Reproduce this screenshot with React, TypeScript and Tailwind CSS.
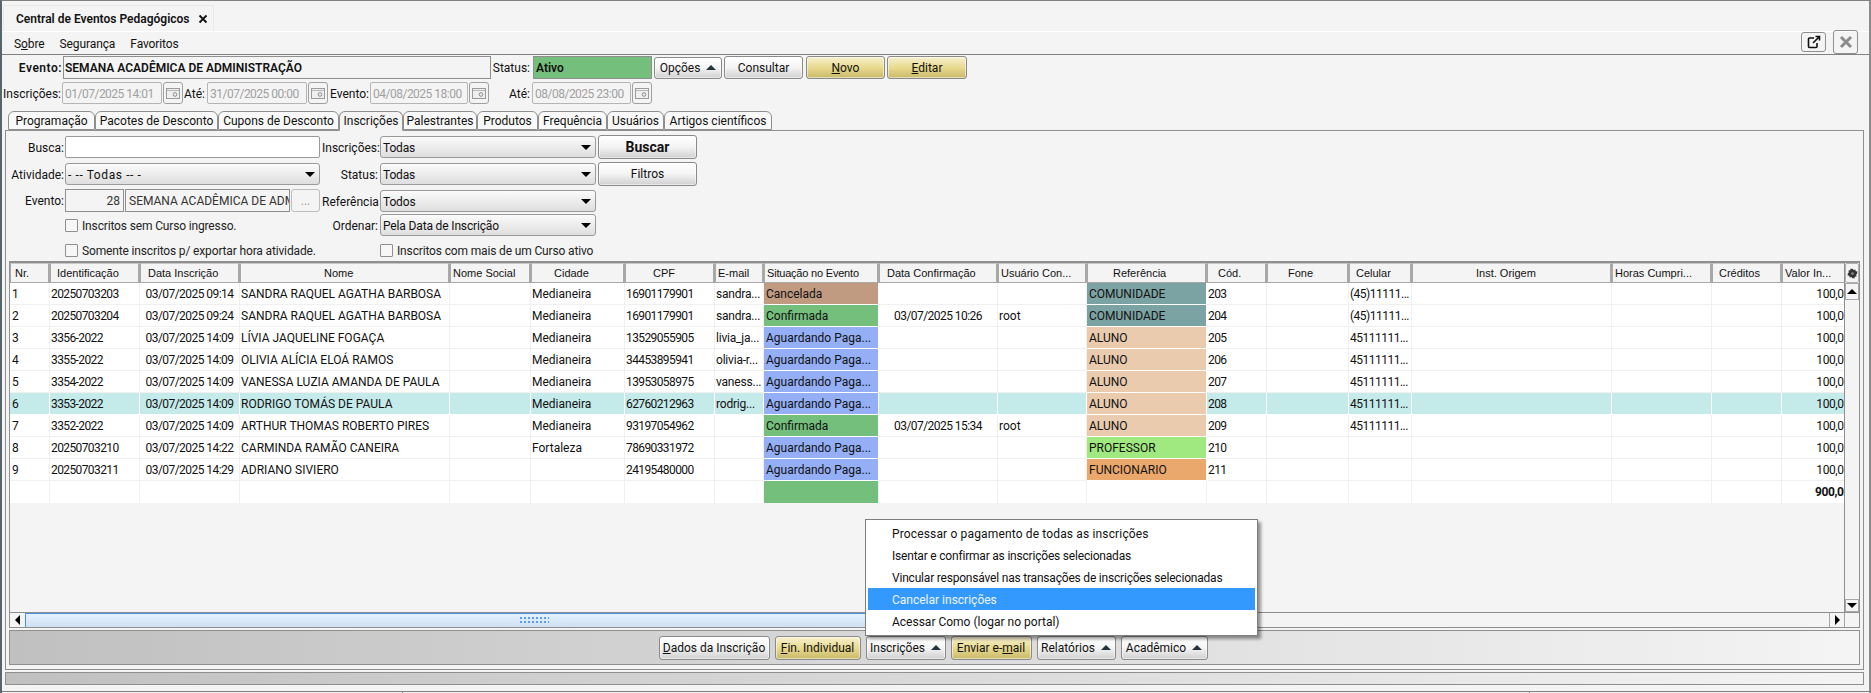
import React from 'react';

const font = "font-['Roboto','Liberation_Sans',sans-serif]";

const columns = [
    { title: 'Nr.', width: 40, head: 'pl-[4px]', cell: 'text-left pl-[2px]' },
    { title: 'Identificação', width: 90, head: 'pl-[6px]', cell: 'text-left pl-[1px] tracking-[-0.6px]' },
    { title: 'Data Inscrição', width: 100, head: 'pl-[7px]', cell: 'text-center tracking-[-0.55px]' },
    { title: 'Nome', width: 210, head: 'pl-[83px]', cell: 'text-left pl-[1px]' },
    { title: 'Nome Social', width: 81, head: 'pl-[2px]', cell: 'text-left' },
    { title: 'Cidade', width: 94, head: 'pl-[22px]', cell: 'text-left pl-[1px]' },
    { title: 'CPF', width: 90, head: 'pl-[27px]', cell: 'text-left pl-[1px] tracking-[-0.6px]' },
    { title: 'E-mail', width: 49, head: 'pl-[2px]', cell: 'text-left pl-[1px] tracking-[-0.2px]' },
    { title: 'Situação no Evento', width: 115, head: 'pl-[2px] tracking-[-0.2px]', cell: 'text-left pl-[2px]' },
    { title: 'Data Confirmação', width: 119, head: 'pl-[7px]', cell: 'text-center tracking-[-0.55px]' },
    { title: 'Usuário Con...', width: 89, head: 'pl-[2px]', cell: 'text-left pl-[1px]' },
    { title: 'Referência', width: 120, head: 'pl-[25px]', cell: 'text-left pl-[2px]' },
    { title: 'Cód.', width: 60, head: 'pl-[10px]', cell: 'text-left pl-[1px] tracking-[-0.6px]' },
    { title: 'Fone', width: 82, head: 'pl-[20px]', cell: 'text-left' },
    { title: 'Celular', width: 63, head: 'pl-[6px]', cell: 'text-left pl-[1px] tracking-[-0.5px]' },
    { title: 'Inst. Origem', width: 200, head: 'pl-[63px]', cell: 'text-left' },
    { title: 'Horas Cumpri...', width: 100, head: 'pl-[2px]', cell: 'text-left' },
    { title: 'Créditos', width: 70, head: 'pl-[6px]', cell: 'text-left' },
    { title: 'Valor In...', width: 72, head: 'pl-[2px]', cell: 'text-right pr-[3px] tracking-[-0.4px]' },
];

const situacao: Record<string, string> = {
    'Cancelada': 'bg-[#c19a82]',
    'Confirmada': 'bg-[#74bf7c]',
    'Aguardando Paga...': 'bg-[#94aff6]',
};

const referencia: Record<string, string> = {
    'COMUNIDADE': 'bg-[#7ca3a3]',
    'ALUNO': 'bg-[#eacbae]',
    'PROFESSOR': 'bg-[#a0e880]',
    'FUNCIONARIO': 'bg-[#eaa86c]',
};

const rows = [
    ['1', '20250703203', '03/07/2025 09:14', 'SANDRA RAQUEL AGATHA BARBOSA', '', 'Medianeira', '16901179901', 'sandra...', 'Cancelada', '', '', 'COMUNIDADE', '203', '', '(45)11111...', '', '', '', '100,00'],
    ['2', '20250703204', '03/07/2025 09:24', 'SANDRA RAQUEL AGATHA BARBOSA', '', 'Medianeira', '16901179901', 'sandra...', 'Confirmada', '03/07/2025 10:26', 'root', 'COMUNIDADE', '204', '', '(45)11111...', '', '', '', '100,00'],
    ['3', '3356-2022', '03/07/2025 14:09', 'LÍVIA JAQUELINE FOGAÇA', '', 'Medianeira', '13529055905', 'livia_ja...', 'Aguardando Paga...', '', '', 'ALUNO', '205', '', '45111111...', '', '', '', '100,00'],
    ['4', '3355-2022', '03/07/2025 14:09', 'OLIVIA ALÍCIA ELOÁ RAMOS', '', 'Medianeira', '34453895941', 'olivia-r...', 'Aguardando Paga...', '', '', 'ALUNO', '206', '', '45111111...', '', '', '', '100,00'],
    ['5', '3354-2022', '03/07/2025 14:09', 'VANESSA LUZIA AMANDA DE PAULA', '', 'Medianeira', '13953058975', 'vaness...', 'Aguardando Paga...', '', '', 'ALUNO', '207', '', '45111111...', '', '', '', '100,00'],
    ['6', '3353-2022', '03/07/2025 14:09', 'RODRIGO TOMÁS DE PAULA', '', 'Medianeira', '62760212963', 'rodrig...', 'Aguardando Paga...', '', '', 'ALUNO', '208', '', '45111111...', '', '', '', '100,00'],
    ['7', '3352-2022', '03/07/2025 14:09', 'ARTHUR THOMAS ROBERTO PIRES', '', 'Medianeira', '93197054962', '', 'Confirmada', '03/07/2025 15:34', 'root', 'ALUNO', '209', '', '45111111...', '', '', '', '100,00'],
    ['8', '20250703210', '03/07/2025 14:22', 'CARMINDA RAMÃO CANEIRA', '', 'Fortaleza', '78690331972', '', 'Aguardando Paga...', '', '', 'PROFESSOR', '210', '', '', '', '', '', '100,00'],
    ['9', '20250703211', '03/07/2025 14:29', 'ADRIANO SIVIERO', '', '', '24195480000', '', 'Aguardando Paga...', '', '', 'FUNCIONARIO', '211', '', '', '', '', '', '100,00'],
];

const tabs = [
    { label: 'Programação', width: 87 },
    { label: 'Pacotes de Desconto', width: 123 },
    { label: 'Cupons de Desconto', width: 121 },
    { label: 'Inscrições', width: 64, active: true },
    { label: 'Palestrantes', width: 74 },
    { label: 'Produtos', width: 61 },
    { label: 'Frequência', width: 69 },
    { label: 'Usuários', width: 57 },
    { label: 'Artigos científicos', width: 108 },
];

const buttonBase = 'flex items-center justify-center shrink-0 border border-[#8a8a8a] rounded-[3px] text-[12px] text-[#111] shadow-[inset_0_0_0_1px_#ffffff80]';
const plainBtn = 'bg-gradient-to-b from-white via-[#f4f4f4] to-[#d0d0d0]';
const goldBtn = 'bg-gradient-to-b from-[#f7f1d0] via-[#e8da8e] to-[#c9b96a]';

function Caret() {
    return <span className="ml-[6px] w-0 h-0 border-x-[5px] border-x-transparent border-b-[5px] border-b-[#26323a]" />;
}

function Arrow({ dir }: { dir: 'up' | 'down' | 'left' | 'right' }) {
    const cls = {
        up: 'border-x-[5px] border-x-transparent border-b-[5px] border-b-black',
        down: 'border-x-[5px] border-x-transparent border-t-[5px] border-t-black',
        left: 'border-y-[5px] border-y-transparent border-r-[5px] border-r-black',
        right: 'border-y-[5px] border-y-transparent border-l-[5px] border-l-black',
    }[dir];
    return <span className={`w-0 h-0 shrink-0 ${cls}`} />;
}

function Label({ width, children, className = 'pt-[1px]' }: { width: string; children: React.ReactNode; className?: string }) {
    return <span className={`${width} shrink-0 text-right text-[12px] text-[#111] whitespace-nowrap ${className}`}>{children}</span>;
}

function DateField({ value, width }: { value: string; width: string }) {
    return (
        <div className="flex items-center gap-[1px] shrink-0">
            <div className={`${width} h-[22px] border border-[#b5b5b5] rounded-[2px] flex items-center pl-[2px] pt-[1px] whitespace-nowrap tracking-[-0.5px] text-[12px] text-[#a0a0a0] bg-[#f4f4f4]`}>{value}</div>
            <div className="w-[20px] h-[22px] border border-[#a0a0a0] rounded-[3px] flex items-center justify-center bg-[#f4f4f4]">
                <svg width="14" height="11" viewBox="0 0 14 11" fill="none">
                    <rect x="0.5" y="0.5" width="13" height="10" fill="#efefef" stroke="#9a9a9a" />
                    <path d="M1 2.5H13" stroke="#b8b8b8" />
                    <circle cx="9" cy="6.5" r="1.8" stroke="#8a8a8a" />
                </svg>
            </div>
        </div>
    );
}

function SelectBox({ value, width, spaced }: { value: string; width: string; spaced?: boolean }) {
    return (
        <div className={`${width} h-[22px] shrink-0 border border-[#9a9a9a] rounded-[3px] flex items-center justify-between pl-[2px] pr-[4px] text-[12px] text-[#111] bg-gradient-to-b from-[#fbfbfb] to-[#dedede]`}>
            <span className={`whitespace-nowrap pt-[1px] ${spaced ? 'tracking-[0.6px]' : 'tracking-[-0.15px]'}`}>{value}</span>
            <Arrow dir="down" />
        </div>
    );
}

function Check({ label, width }: { label: string; width: string }) {
    return (
        <div className={`${width} h-[13px] flex items-center gap-[4px] shrink-0 text-[12px] text-[#222] whitespace-nowrap tracking-[-0.15px]`}>
            <span className="w-[13px] h-[13px] shrink-0 border border-[#8f8f8f] bg-[#f7f7f7] rounded-[1px]" />
            {label}
        </div>
    );
}

function TableCell({ column, value, selected }: { column: (typeof columns)[number]; value: string; selected: boolean }) {
    const fill = situacao[value] || referencia[value];
    return (
        <div
            className={`shrink-0 h-full overflow-hidden whitespace-nowrap leading-[23px] border-r border-b ${fill ? `${fill} border-white` : selected ? 'border-white' : 'border-[#f0f0f0]'} ${column.cell}`}
            style={{ width: column.width }}
        >
            {value}
        </div>
    );
}

export default function App() {
    return (
        <div className={`relative w-[1871px] h-[693px] overflow-hidden bg-[#f4f4f4] flex flex-col border-t border-[#808080] border-l-2 border-l-[#56666c] border-r-2 border-r-[#8a8a8a] ${font}`}>
            {/* Window tab */}
            <div className="h-[30px] flex items-end shrink-0 pl-[1px]">
                <div className="w-[211px] h-[26px] border border-b-0 border-[#e8e8e8] rounded-t-[2px] flex items-center pl-[12px] gap-[8px] text-[12px] font-semibold text-[#111]">
                    Central de Eventos Pedagógicos
                    <svg width="10" height="10" viewBox="0 0 10 10"><path d="M1.5 1.5L8.5 8.5M8.5 1.5L1.5 8.5" stroke="#111" strokeWidth="1.8" /></svg>
                </div>
            </div>

            {/* Menu */}
            <div className="h-[24px] shrink-0 border-t border-white border-b border-b-[#808080] flex items-center pl-[12px] pr-[11px] gap-[15px] text-[12px] text-[#111]">
                <span className="pt-[1px] tracking-[-0.1px]">S<u>o</u>bre</span>
                <span className="pt-[1px] tracking-[-0.1px]">Segurança</span>
                <span className="pt-[1px] tracking-[-0.1px]">Favoritos</span>
                <div className="ml-auto flex gap-[7px]">
                    <div className="w-[25px] h-[20px] border border-[#8f8f8f] rounded-[3px] flex items-center justify-center">
                        <svg width="14" height="14" viewBox="0 0 14 14" fill="none">
                            <path d="M7 3H2.5A1 1 0 0 0 1.5 4V11.5A1 1 0 0 0 2.5 12.5H9A1 1 0 0 0 10 11.5V8" stroke="#111" strokeWidth="1.6" />
                            <path d="M6 8L12 2M8.5 1.5H12.5V5.5" stroke="#111" strokeWidth="1.6" />
                        </svg>
                    </div>
                    <div className="w-[25px] h-[24px] -mt-[2px] border border-[#8f8f8f] rounded-[3px] flex items-center justify-center">
                        <svg width="14" height="14" viewBox="0 0 14 14"><path d="M2 2L12 12M12 2L2 12" stroke="#8c8c8c" strokeWidth="3" /></svg>
                    </div>
                </div>
            </div>

            {/* Evento row */}
            <div className="h-[23px] mt-[1px] shrink-0 flex items-center">
                <Label width="w-[60px]" className="font-semibold tracking-[0.5px]">Evento:</Label>
                <div className="ml-[1px] w-[428px] h-full border border-[#8f8f8f] bg-[#f4f4f4] flex items-center pl-[1px] text-[12px] font-semibold text-[#111] shrink-0">SEMANA ACADÊMICA DE ADMINISTRAÇÃO</div>
                <Label width="w-[39px]" className="">Status:</Label>
                <div className="ml-[3px] w-[119px] h-full bg-[#74bf7c] border border-[#8f8f8f] flex items-center pl-[2px] text-[12px] font-semibold text-[#111] shrink-0">Ativo</div>
                <div className={`ml-[2px] w-[68px] h-[22px] ${buttonBase} ${plainBtn}`}>Opções<Caret /></div>
                <div className={`ml-[2px] w-[79px] h-full ${buttonBase} ${plainBtn}`}>Consultar</div>
                <div className={`ml-[3px] w-[79px] h-full ${buttonBase} ${goldBtn}`}><span><u>N</u>ovo</span></div>
                <div className={`ml-[2px] w-[80px] h-full ${buttonBase} ${goldBtn}`}><span><u>E</u>ditar</span></div>
            </div>

            {/* Datas row */}
            <div className="h-[22px] mt-[3px] shrink-0 flex items-center">
                <Label width="w-[59px]">Inscrições:</Label>
                <div className="ml-[1px]"><DateField value="01/07/2025 14:01" width="w-[100px]" /></div>
                <Label width="w-[22px]">Até:</Label>
                <div className="ml-[2px]"><DateField value="31/07/2025 00:00" width="w-[100px]" /></div>
                <Label width="w-[41px]">Evento:</Label>
                <div className="ml-[1px]"><DateField value="04/08/2025 18:00" width="w-[98px]" /></div>
                <Label width="w-[41px]">Até:</Label>
                <div className="ml-[2px]"><DateField value="08/08/2025 23:00" width="w-[99px]" /></div>
            </div>

            {/* Tabs */}
            <div className="h-[19px] mt-[7px] shrink-0 flex items-end pl-[6px] relative z-10">
                {tabs.map(tab => (
                    <div
                        key={tab.label}
                        className={`shrink-0 flex items-center justify-center whitespace-nowrap text-[12px] text-[#111] border border-[#8f8f8f] rounded-t-[6px] ${tab.active ? 'h-[20px] bg-[#f4f4f4] border-b-[#f4f4f4] -mb-[1px]' : 'h-[19px] bg-[#f9f9f9]'}`}
                        style={{ width: tab.width }}
                    >
                        {tab.label}
                    </div>
                ))}
            </div>

            {/* Tab panel */}
            <div className="h-[540px] shrink-0 ml-[3px] mr-[5px] border border-[#8f8f8f] px-[3px] flex flex-col">
                {/* Filters */}
                <div className="mt-[5px] shrink-0 flex">
                    <div className="w-[313px] shrink-0 flex flex-col">
                        <div className="h-[22px] flex items-center gap-[1px]">
                            <Label width="w-[55px]">Busca:</Label>
                            <div className="w-[255px] h-full border border-[#9a9a9a] rounded-[2px] bg-white" />
                        </div>
                        <div className="h-[22px] mt-[5px] flex items-center gap-[1px]">
                            <Label width="w-[55px]">Atividade:</Label>
                            <SelectBox value="- -- Todas -- -" width="w-[255px]" spaced />
                        </div>
                        <div className="h-[23px] mt-[4px] flex items-center gap-[1px]">
                            <Label width="w-[55px]">Evento:</Label>
                            <div className="w-[59px] h-full border border-[#8f8f8f] flex items-center justify-end pr-[3px] text-[12px] text-[#333] bg-[#f4f4f4]">28</div>
                            <div className="w-[165px] h-full border border-[#8f8f8f] flex items-center pl-[3px] overflow-hidden whitespace-nowrap text-[12px] text-[#333] bg-[#f4f4f4]">SEMANA ACADÊMICA DE ADM</div>
                            <div className="w-[29px] h-full border border-[#bdbdbd] rounded-[3px] flex items-center justify-center text-[12px] text-[#9a9a9a]">...</div>
                        </div>
                        <div className="mt-[7px] ml-[56px]"><Check label="Inscritos sem Curso ingresso." width="w-[255px]" /></div>
                        <div className="mt-[12px] ml-[56px]"><Check label="Somente inscritos p/ exportar hora atividade." width="w-[255px]" /></div>
                    </div>
                    <div className="w-[274px] shrink-0 flex flex-col">
                        <div className="h-[22px] flex items-center gap-[1px]">
                            <Label width="w-[56px]">Inscrições:</Label>
                            <div className="ml-[1px]"><SelectBox value="Todas" width="w-[216px]" /></div>
                        </div>
                        <div className="h-[22px] mt-[5px] flex items-center gap-[1px]">
                            <Label width="w-[56px]">Status:</Label>
                            <div className="ml-[1px]"><SelectBox value="Todas" width="w-[216px]" /></div>
                        </div>
                        <div className="h-[22px] mt-[5px] flex items-center gap-[1px]">
                            <Label width="w-[56px]">Referência</Label>
                            <div className="ml-[1px]"><SelectBox value="Todos" width="w-[216px]" /></div>
                        </div>
                        <div className="h-[22px] mt-[2px] flex items-center gap-[1px]">
                            <Label width="w-[56px]">Ordenar:</Label>
                            <div className="ml-[1px]"><SelectBox value="Pela Data de Inscrição" width="w-[216px]" /></div>
                        </div>
                        <div className="mt-[8px] ml-[58px]"><Check label="Inscritos com mais de um Curso ativo" width="w-[216px]" /></div>
                    </div>
                    <div className="ml-[2px] flex flex-col gap-[3px] -mt-[1px]">
                        <div className={`w-[99px] h-[24px] ${buttonBase} ${plainBtn} !text-[14px] font-bold`}>Buscar</div>
                        <div className={`w-[99px] h-[24px] ${buttonBase} ${plainBtn}`}>Filtros</div>
                    </div>
                </div>

                {/* Grid */}
                <div className="mt-[4px] h-[367px] shrink-0 border-t-2 border-x border-b border-[#8f8f8f] flex flex-col">
                    <div className="flex-1 min-h-0 flex">
                        <div className="flex-1 min-w-0 overflow-hidden text-[12px] text-[#111]">
                            <div className="flex h-[20px] font-['Liberation_Sans',sans-serif] text-[11px]">
                                {columns.map(col => (
                                    <div
                                        key={col.title}
                                        className={`shrink-0 overflow-hidden whitespace-nowrap text-left leading-[18px] bg-[#f4f4f4] border border-[#a8a8a8] border-t-[#c8c8c8] border-r-2 ${col.head}`}
                                        style={{ width: col.width }}
                                    >
                                        {col.title}
                                    </div>
                                ))}
                            </div>
                            {rows.map(row => {
                                const selected = row[0] === '6';
                                return (
                                    <div key={row[0]} className={`flex h-[22px] ${selected ? 'bg-[#c5eaea]' : 'bg-white'}`}>
                                        {row.map((value, i) => (
                                            <TableCell key={i} column={columns[i]} value={value} selected={selected} />
                                        ))}
                                    </div>
                                );
                            })}
                            <div className="flex h-[22px] bg-white">
                                {columns.map((col, i) => (
                                    <div
                                        key={col.title}
                                        className={`shrink-0 overflow-hidden whitespace-nowrap leading-[23px] border-r border-[#f0f0f0] ${i === 8 ? 'bg-[#74bf7c]' : ''} ${i === 18 ? 'font-bold text-right pr-[3px] tracking-[-0.4px]' : ''}`}
                                        style={{ width: col.width }}
                                    >
                                        {i === 18 ? '900,00' : ''}
                                    </div>
                                ))}
                            </div>
                        </div>
                        <div className="w-[15px] shrink-0 flex flex-col border-l border-[#8f8f8f] bg-[#f4f4f4]">
                            <div className="h-[20px] shrink-0 border border-[#b0b0b0] rounded-[2px] flex items-center justify-center">
                                <svg width="11" height="11" viewBox="0 0 24 24" fill="#333">
                                    <path d="M12 1l2.4 3.2 3.9-1 .6 4 4 .6-1 3.9L23 12l-3.1 2.4 1 3.9-4 .6-.6 4-3.9-1L12 23l-2.4-3.1-3.9 1-.6-4-4-.6 1-3.9L1 12l3.1-2.4-1-3.9 4-.6.6-4 3.9 1z" />
                                    <circle cx="12" cy="12" r="3" fill="#888" />
                                </svg>
                            </div>
                            <div className="h-[17px] shrink-0 border border-[#a8a8a8] flex items-center justify-center"><Arrow dir="up" /></div>
                            <div className="flex-1" />
                            <div className="h-[13px] shrink-0 border border-[#a8a8a8] flex items-center justify-center"><Arrow dir="down" /></div>
                        </div>
                    </div>
                    <div className="h-[15px] shrink-0 flex border-t border-[#8f8f8f]">
                        <div className="w-[15px] shrink-0 flex items-center justify-center"><Arrow dir="left" /></div>
                        <div className="w-[1016px] shrink-0 border-t border-l border-[#4a90e2] bg-gradient-to-b from-[#e4f2ff] to-[#cfe0f2] flex items-center justify-center">
                            <span className="w-[30px] h-[9px] bg-[radial-gradient(#5a9ee8_1px,transparent_1px)] bg-[length:4px_4px]" />
                        </div>
                        <div className="flex-1" />
                        <div className="w-[15px] shrink-0 border-l border-[#a8a8a8] flex items-center justify-center"><Arrow dir="right" /></div>
                        <div className="w-[15px] shrink-0 border-l border-[#a8a8a8]" />
                    </div>
                </div>

                {/* Action bar */}
                <div className="mt-[2px] h-[35px] shrink-0 border border-[#8f8f8f] bg-gradient-to-r from-[#c0c0c0] to-[#f4f4f4] flex items-center justify-center gap-[5px] pr-[3px]">
                    <div className={`w-[111px] h-[24px] ${buttonBase} ${plainBtn}`}><span><u>D</u>ados da Inscrição</span></div>
                    <div className={`w-[86px] h-[24px] ${buttonBase} ${goldBtn}`}><span><u>F</u>in. Individual</span></div>
                    <div className={`w-[80px] h-[24px] ${buttonBase} ${plainBtn}`}>Inscrições<Caret /></div>
                    <div className={`w-[81px] h-[24px] ${buttonBase} ${goldBtn}`}><span>Enviar e-<u>m</u>ail</span></div>
                    <div className={`w-[79px] h-[24px] ${buttonBase} ${plainBtn}`}>Relatórios<Caret /></div>
                    <div className={`w-[87px] h-[24px] ${buttonBase} ${plainBtn}`}>Acadêmico<Caret /></div>
                </div>
            </div>

            {/* Status bars */}
            <div className="mt-[2px] h-[13px] shrink-0 ml-[3px] mr-[5px] border border-[#8f8f8f] bg-gradient-to-r from-[#c0c0c0] to-[#f4f4f4]" />
            <div className="mt-[6px] h-[3px] shrink-0 border-t border-[#808080] relative">
                <span className="absolute left-[400px] top-0 w-px h-[3px] bg-[#808080]" />
                <span className="absolute left-[1527px] top-0 w-px h-[3px] bg-[#808080]" />
            </div>

            {/* Inscrições menu */}
            <div className="absolute left-[863px] top-[518px] w-[393px] h-[117px] bg-white border border-[#7f7f7f] shadow-[3px_3px_3px_#00000066] p-[2px] text-[12px] text-[#111]">
                <div className="h-[22px] flex items-center pl-[24px] pt-[1px] tracking-[0.15px]">Processar o pagamento de todas as inscrições</div>
                <div className="h-[22px] flex items-center pl-[24px] pt-[1px] tracking-[-0.2px]">Isentar e confirmar as inscrições selecionadas</div>
                <div className="h-[22px] flex items-center pl-[24px] pt-[1px] tracking-[-0.2px]">Vincular responsável nas transações de inscrições selecionadas</div>
                <div className="h-[22px] flex items-center pl-[24px] pt-[1px] bg-[#3399ff] text-[#eef6ff]">Cancelar inscrições</div>
                <div className="h-[22px] flex items-center pl-[24px] pt-[1px]">Acessar Como (logar no portal)</div>
            </div>
        </div>
    );
}
